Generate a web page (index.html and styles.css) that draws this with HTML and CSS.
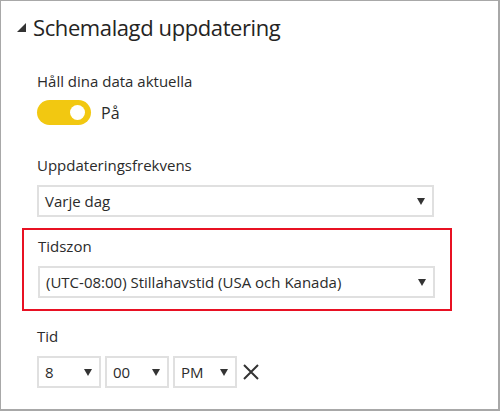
FILE: index.html
```html
<!DOCTYPE html>
<html>
<head>
<meta charset="utf-8">
<link rel="stylesheet" href="styles.css">
</head>
<body>
<div class="panel">
  <div class="title">
    <svg class="caret" width="9" height="9" viewBox="0 0 9 9"><polygon points="9,0 9,9 0,9" fill="#333"/></svg>
    <span>Schemalagd uppdatering</span>
  </div>
  <div class="body">
    <div class="label label-first">Håll dina data aktuella</div>
    <div class="toggle-row">
      <div class="toggle"><div class="knob"></div></div>
      <span class="toggle-text">På</span>
    </div>
    <div class="label label-freq">Uppdateringsfrekvens</div>
    <div class="select wide">
      <span>Varje dag</span>
      <svg class="arrow" width="8" height="7" viewBox="0 0 8 7"><polygon points="0,0 8,0 4,7" fill="#333"/></svg>
    </div>
  </div>
  <div class="highlight">
    <div class="label label-tz">Tidszon</div>
    <div class="select wide">
      <span>(UTC-08:00) Stillahavstid (USA och Kanada)</span>
      <svg class="arrow" width="8" height="7" viewBox="0 0 8 7"><polygon points="0,0 8,0 4,7" fill="#333"/></svg>
    </div>
  </div>
  <div class="body">
    <div class="label label-time">Tid</div>
    <div class="time-row">
      <div class="select small"><span>8</span><svg class="arrow" width="8" height="7" viewBox="0 0 8 7"><polygon points="0,0 8,0 4,7" fill="#333"/></svg></div>
      <div class="select small"><span>00</span><svg class="arrow" width="8" height="7" viewBox="0 0 8 7"><polygon points="0,0 8,0 4,7" fill="#333"/></svg></div>
      <div class="select small"><span>PM</span><svg class="arrow" width="8" height="7" viewBox="0 0 8 7"><polygon points="0,0 8,0 4,7" fill="#333"/></svg></div>
      <svg class="close" width="16" height="16" viewBox="0 0 16 16"><path d="M1 1 L15 15 M15 1 L1 15" stroke="#333" stroke-width="2" fill="none"/></svg>
    </div>
  </div>
</div>
</body>
</html>
```

FILE: styles.css
```css
html, body {
  margin: 0;
  padding: 0;
  background: #fff;
}
body {
  font-family: "Open Sans", "Noto Sans", sans-serif;
  color: #2b2b2b;
}
.panel {
  box-sizing: border-box;
  width: 500px;
  height: 411px;
  border: 1px solid #a8a8a8;
  border-right-width: 2px;
  border-bottom-width: 2px;
  padding-top: 10px;
}
.title {
  display: flex;
  align-items: center;
  height: 32px;
  padding-left: 16px;
  font-size: 22px;
  line-height: 32px;
  letter-spacing: -0.4px;
  color: #252423;
}
.caret {
  margin-right: 7px;
  margin-top: 1px;
}
.body {
  padding-left: 36px;
}
.label {
  font-size: 15px;
  line-height: 20px;
  height: 20px;
}
.label-first { margin-top: 28px; }
.toggle-row {
  display: flex;
  align-items: center;
  margin-top: 9px;
  height: 25px;
}
.toggle {
  box-sizing: border-box;
  width: 54px;
  height: 25px;
  border-radius: 13px;
  background: #f2c811;
  display: flex;
  align-items: center;
  justify-content: flex-end;
  padding-right: 6px;
}
.knob {
  width: 15px;
  height: 15px;
  border-radius: 50%;
  background: #fff;
}
.toggle-text {
  margin-left: 10px;
  font-size: 16px;
}
.label-freq { margin-top: 30px; }
.select {
  box-sizing: border-box;
  height: 32px;
  border: 2px solid #e0e0e0;
  display: flex;
  align-items: center;
  justify-content: space-between;
  padding: 0 7px 0 6px;
  font-size: 15px;
  margin-top: 10px;
}
.wide { width: 397px; }
.highlight {
  margin: 11px 0 0 21px;
  width: 430px;
  box-sizing: border-box;
  border: 2px solid #e81123;
  padding: 6px 0 11px 14px;
}
.label-tz { margin-top: 0; }
.label-time { margin-top: 15px; }
.time-row {
  display: flex;
  align-items: center;
  gap: 4px;
  margin-top: 10px;
}
.time-row .select {
  margin-top: 0;
  width: 64px;
}
.close {
  margin-left: 2px;
}
```
